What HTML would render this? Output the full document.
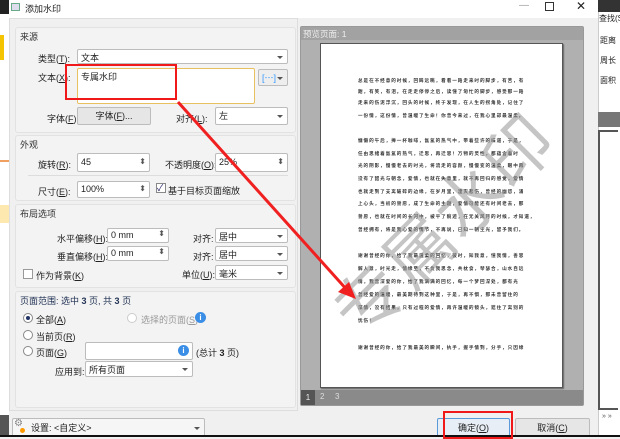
<!DOCTYPE html>
<html><head><meta charset="utf-8"><style>
*{box-sizing:border-box;margin:0;padding:0}
body{width:620px;height:437px;overflow:hidden;position:relative;background:#f0f0f0;font-family:"Liberation Sans","Noto Sans CJK SC",sans-serif;font-size:9px;color:#222}
.a{position:absolute}
.grp{position:absolute;background:#f3f3f3;border:1px solid #e2e2e2;border-radius:3px}
.gl{position:absolute;left:4px;top:2px;font-size:9px;color:#333}
.lbl{position:absolute;font-size:9px;white-space:nowrap}
.box{position:absolute;background:#fff;border:1px solid #bcbcbc;border-radius:2px;font-size:9px;padding:1px 3px;white-space:nowrap}
.dd::after{content:"";position:absolute;right:4px;top:50%;margin-top:-1px;border-left:3px solid transparent;border-right:3px solid transparent;border-top:3px solid #555}
.sp::after{content:"⬍";position:absolute;right:3px;top:0;font-size:8px;color:#555}
.btn{position:absolute;background:#e6e6e6;border:1px solid #bcbcbc;border-radius:2px;text-align:center;font-size:9px}
.rad{position:absolute;width:10px;height:10px;border:1px solid #888;border-radius:50%;background:#fff}
.pl{position:absolute;left:37px;font-size:4.6px;color:#333;white-space:nowrap;letter-spacing:.95px;font-weight:bold}
</style></head><body>
<div class="a" style="left:0;top:0;width:9px;height:437px;background:#fff"></div>
<div class="a" style="left:0;top:0;width:9px;height:14px;background:#222"></div>
<div class="a" style="left:0;top:35px;width:4px;height:25px;background:#f5c400"></div>
<div class="a" style="left:0;top:160px;width:9px;height:2px;background:#f0a060"></div>
<div class="a" style="left:0;top:205px;width:9px;height:18px;background:#fde9b0"></div>
<div class="a" style="left:0;top:415px;width:9px;height:22px;background:#555"></div>
<div class="a" style="left:598px;top:0;width:22px;height:437px;background:#fff;border-left:1px solid #ccc"></div>
<div class="a" style="left:598px;top:0;width:22px;height:12px;background:#333"></div>
<div class="lbl" style="left:599px;top:13px;font-size:8px">查找(S</div>
<div class="lbl" style="left:600px;top:35px;font-size:8px">距离</div>
<div class="lbl" style="left:600px;top:55px;font-size:8px">周长</div>
<div class="lbl" style="left:600px;top:75px;font-size:8px">面积</div>
<div class="a" style="left:598px;top:112px;width:22px;height:15px;background:#777"></div>
<div class="a" style="left:598px;top:130px;width:20px;height:280px;background:#fff;border:2px solid #555;border-right:none"></div>
<div class="lbl" style="left:602px;top:413px;font-size:7px;color:#555">» »</div>
<div class="a" style="left:9px;top:0;width:589px;height:18px;background:#fff"></div>
<div class="a" style="left:11px;top:3px;width:9px;height:8px;border:1px solid #6a8;background:#dde"></div>
<div class="lbl" style="left:25px;top:2px;font-size:9px">添加水印</div>
<div class="lbl" style="left:519px;top:0px;font-size:10px;color:#999">—</div>
<div class="a" style="left:545px;top:2px;width:9px;height:9px;border:1px solid #333"></div>
<div class="lbl" style="left:576px;top:-1px;font-size:12px">✕</div>
<div class="a" style="left:9px;top:18px;width:289px;height:393px;background:#f0f0f0;border:1px solid #ddd"></div>
<div class="grp" style="left:15px;top:27px;width:281px;height:106px"><div class="gl">来源</div></div>
<div class="lbl" style="left:38px;top:52px">类型(<u>T</u>):</div>
<div class="box dd" style="left:77px;top:49px;width:211px;height:15px">文本</div>
<div class="lbl" style="left:38px;top:71px">文本(<u>X</u>):</div>
<div class="box" style="left:77px;top:68px;width:178px;height:36px;border-color:#e8c060">专属水印</div>
<div class="box dd" style="left:258px;top:69px;width:30px;height:17px;background:#eee;color:#39f">[⋯]</div>
<div class="lbl" style="left:47px;top:112px">字体(<u>F</u>):</div>
<div class="btn" style="left:77px;top:107px;width:74px;height:18px;line-height:16px">字体(<u>F</u>)...</div>
<div class="lbl" style="left:176px;top:112px">对齐(<u>L</u>):</div>
<div class="box dd" style="left:215px;top:107px;width:73px;height:18px;line-height:14px">左</div>
<div class="grp" style="left:15px;top:135px;width:281px;height:66px"><div class="gl">外观</div></div>
<div class="lbl" style="left:38px;top:158px">旋转(<u>R</u>):</div>
<div class="box sp" style="left:77px;top:153px;width:73px;height:19px;line-height:15px">45</div>
<div class="lbl" style="left:165px;top:158px">不透明度(<u>O</u>):</div>
<div class="box sp" style="left:215px;top:153px;width:73px;height:19px;line-height:15px">25%</div>
<div class="a" style="left:28px;top:175px;width:260px;height:1px;background:#ddd"></div>
<div class="lbl" style="left:38px;top:185px">尺寸(<u>E</u>):</div>
<div class="box sp" style="left:77px;top:181px;width:73px;height:17px;line-height:13px">100%</div>
<div class="a" style="left:156px;top:183px;width:10px;height:10px;border:1px solid #888;background:#fff;font-size:9px;line-height:8px;color:#226">✓</div>
<div class="lbl" style="left:168px;top:184px">基于目标页面缩放</div>
<div class="grp" style="left:15px;top:204px;width:281px;height:84px"><div class="gl">布局选项</div></div>
<div class="lbl" style="left:57px;top:232px">水平偏移(<u>H</u>):</div>
<div class="box sp" style="left:107px;top:228px;width:62px;height:15px">0 mm</div>
<div class="lbl" style="left:193px;top:232px">对齐:</div>
<div class="box dd" style="left:215px;top:228px;width:73px;height:15px">居中</div>
<div class="lbl" style="left:57px;top:250px">垂直偏移(<u>H</u>):</div>
<div class="box sp" style="left:107px;top:246px;width:62px;height:15px">0 mm</div>
<div class="lbl" style="left:193px;top:250px">对齐:</div>
<div class="box dd" style="left:215px;top:246px;width:73px;height:15px">居中</div>
<div class="a" style="left:23px;top:269px;width:10px;height:10px;border:1px solid #999;background:#fff"></div>
<div class="lbl" style="left:36px;top:269px">作为背景(<u>K</u>)</div>
<div class="lbl" style="left:182px;top:268px">单位(<u>U</u>):</div>
<div class="box dd" style="left:215px;top:265px;width:73px;height:15px">毫米</div>
<div class="grp" style="left:15px;top:291px;width:281px;height:117px"><div class="gl" style="color:#235">页面范围: 选中 <b>3</b> 页, 共 <b>3</b> 页</div></div>
<div class="rad" style="left:23px;top:313px"><div class="a" style="left:2px;top:2px;width:4px;height:4px;border-radius:50%;background:#236"></div></div>
<div class="lbl" style="left:36px;top:313px">全部(<u>A</u>)</div>
<div class="rad" style="left:127px;top:313px;border-color:#ccc"></div>
<div class="lbl" style="left:141px;top:313px;color:#999">选择的页面(<u>S</u>)</div>
<div class="a" style="left:195px;top:312px;width:11px;height:11px;border-radius:50%;background:#3a8ee6;color:#fff;font-size:8px;text-align:center;line-height:11px;font-weight:bold">i</div>
<div class="rad" style="left:23px;top:330px"></div>
<div class="lbl" style="left:36px;top:330px">当前页(<u>R</u>)</div>
<div class="rad" style="left:23px;top:346px"></div>
<div class="lbl" style="left:36px;top:346px">页面(<u>G</u>)</div>
<div class="box" style="left:85px;top:342px;width:108px;height:18px"></div>
<div class="a" style="left:178px;top:345px;width:11px;height:11px;border-radius:50%;background:#3a8ee6;color:#fff;font-size:8px;text-align:center;line-height:11px;font-weight:bold">i</div>
<div class="lbl" style="left:196px;top:346px">(总计 <b>3</b> 页)</div>
<div class="lbl" style="left:55px;top:365px">应用到:</div>
<div class="box dd" style="left:85px;top:361px;width:108px;height:16px">所有页面</div>
<div class="a" style="left:300px;top:26px;width:284px;height:380px;background:#b0b0b0;border:1px solid #999;border-radius:2px"></div>
<div class="a" style="left:301px;top:27px;width:282px;height:13px;background:#a2a2a2"></div>
<div class="lbl" style="left:303px;top:28px;color:#eee;font-size:8.5px">预览页面: 1</div>
<div class="a" style="left:320px;top:43px;width:243px;height:345px;background:#fff;border:1px solid #555;box-shadow:1px 1px 1px #666;overflow:hidden">
<div class="pl" style="top:34px">总是在不经意的时候，回眸远眺，看看一路走来时的脚步，有苦，有</div>
<div class="pl" style="top:45px">甜，有笑，有泪。在走走停停之后，读懂了匆忙的脚步，感受那一路</div>
<div class="pl" style="top:56px">走来的伤泥浮沉，回头的时候，终于发现，在人生的拐角处，记住了</div>
<div class="pl" style="top:69px">一份情，这份情，曾温暖了生命！你曾今来过，在我心里却最温柔。</div>
<div class="pl" style="top:94px">慵懒的午后，捧一杯咖啡，氤氲的热气中，带着些许的味道，于是，</div>
<div class="pl" style="top:107px">任由思绪着氤氲的热气，迁思，再迁思！万物的灵性，都蕴含着时</div>
<div class="pl" style="top:119px">光的阴影，慢慢老去的时光，将流走的容颜，慢慢变的温柔，眼中再</div>
<div class="pl" style="top:132px">没有了韶光与朝念，爱情，也就在失意里，就不再回归的感觉，爱情</div>
<div class="pl" style="top:145px">也就走到了支离破碎的边缘，在岁月里，湮灭悲伤，曾经的幽怨，涌</div>
<div class="pl" style="top:157px">上心头，当初的誓愿，成了生命的主题，爱情可能还有时间老去，那</div>
<div class="pl" style="top:170px">誓愿，也就在时间的长河中，被平了痕迹，在无关风月的时候，才知道，</div>
<div class="pl" style="top:183px">曾经拥有，将是我心爱的情节，不再说，已知一朝尘光，留予我们。</div>
<div class="pl" style="top:209px">谢谢曾经的你，给了我最温柔的回忆，彼时，知我意，懂我情，善思</div>
<div class="pl" style="top:222px">解人意，时光走，情缘至，不负我思念，共枕食，琴瑟合，山水自远</div>
<div class="pl" style="top:235px">情，我曾深爱的你，给了我满满的回忆，每一个梦回深处，都有光</div>
<div class="pl" style="top:248px">曾经爱的温暖，最美期待到这种里，于是，再不惧，那未曾留住的</div>
<div class="pl" style="top:261px">深情，没有结果，只有过程的爱情，再许温暖的镜头，遮住了离别的</div>
<div class="pl" style="top:274px">忧伤！</div>
<div class="pl" style="top:301px">谢谢曾经的你，给了我最美的瞬间，执手，握手情到，分手，只因缘</div>
<div class="a" style="left:-30px;top:128px;width:300px;font-size:68px;color:rgba(150,150,150,.55);transform:rotate(-45deg);transform-origin:center;white-space:nowrap;font-family:'Noto Sans CJK SC',sans-serif;letter-spacing:2px;text-align:center">专属水印</div>
</div>
<div class="a" style="left:301px;top:390px;width:282px;height:15px;background:#8a8a8a"></div>
<div class="a" style="left:301px;top:390px;width:14px;height:15px;background:#555;color:#eee;font-size:8px;text-align:center;line-height:15px">1</div>
<div class="lbl" style="left:320px;top:392px;color:#ddd;font-size:8px">2</div>
<div class="lbl" style="left:335px;top:392px;color:#ddd;font-size:8px">3</div>
<div class="box dd" style="left:12px;top:418px;width:193px;height:19px;background:#f6f6f6;padding-left:18px;line-height:16px">设置: &lt;自定义&gt;</div>
<div class="lbl" style="left:14px;top:418px;color:#888;font-size:10px">⚙</div>
<div class="a" style="left:20px;top:428px;width:5px;height:5px;border-radius:50%;background:#f90"></div>
<div class="btn" style="left:437px;top:418px;width:73px;height:19px;line-height:18px;border-color:#5a9ad8;background:#e8eef5">确定(<u>O</u>)</div>
<div class="btn" style="left:515px;top:418px;width:75px;height:19px;line-height:18px">取消(<u>C</u>)</div>
<div class="a" style="left:0;top:435px;width:620px;height:2px;background:#111"></div>
<div class="a" style="left:65px;top:64px;width:112px;height:36px;border:2px solid #f01818"></div>
<div class="a" style="left:443px;top:411px;width:70px;height:28px;border:2px solid #f01818"></div>
<svg class="a" style="left:0;top:0" width="620" height="437">
<line x1="178" y1="102" x2="348" y2="291" stroke="#f02020" stroke-width="3"/>
<polygon points="356,299 338,292 349,282" fill="#f02020"/>
</svg>
</body></html>
